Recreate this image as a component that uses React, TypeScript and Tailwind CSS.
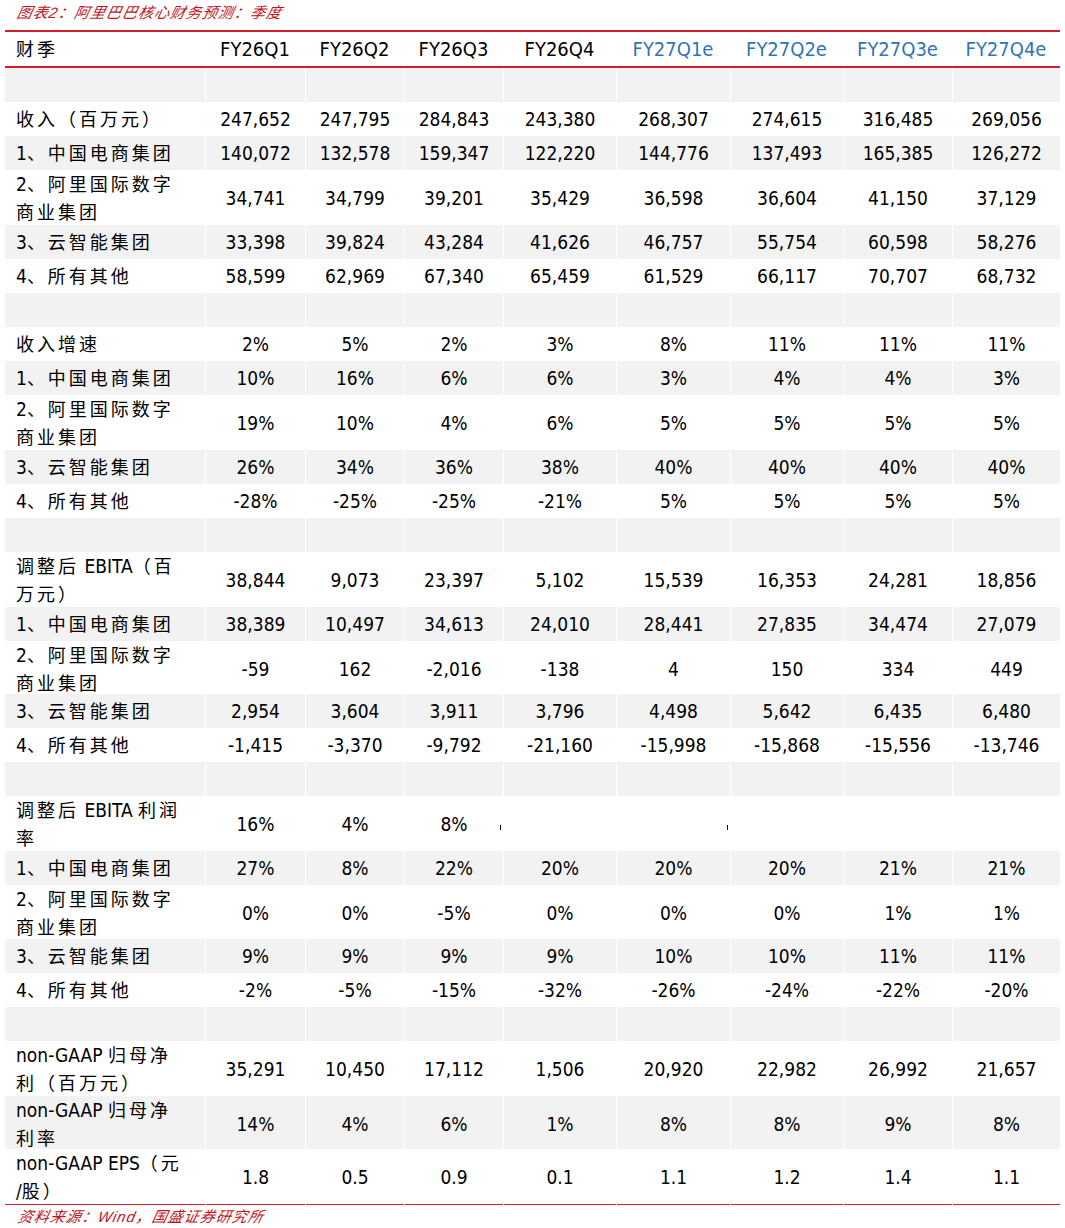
import React from "react";

const BLUE = "text-[#2e75b6]";

type Row = {
  label: string[];
  values: string[];
  gray: boolean;
  h: string;
  marks?: boolean;
};

const headers = ["FY26Q1", "FY26Q2", "FY26Q3", "FY26Q4", "FY27Q1e", "FY27Q2e", "FY27Q3e", "FY27Q4e"];

const SPACER: Row = { label: [], values: [], gray: true, h: "h-[34px]" };

const rows: Row[] = [
  SPACER,
  { label: ["收入（百万元）"], values: ["247,652", "247,795", "284,843", "243,380", "268,307", "274,615", "316,485", "269,056"], gray: false, h: "h-[34px]" },
  { label: ["1、中国电商集团"], values: ["140,072", "132,578", "159,347", "122,220", "144,776", "137,493", "165,385", "126,272"], gray: true, h: "h-[34px]" },
  { label: ["2、阿里国际数字", "商业集团"], values: ["34,741", "34,799", "39,201", "35,429", "36,598", "36,604", "41,150", "37,129"], gray: false, h: "h-[55px]" },
  { label: ["3、云智能集团"], values: ["33,398", "39,824", "43,284", "41,626", "46,757", "55,754", "60,598", "58,276"], gray: true, h: "h-[34px]" },
  { label: ["4、所有其他"], values: ["58,599", "62,969", "67,340", "65,459", "61,529", "66,117", "70,707", "68,732"], gray: false, h: "h-[34px]" },
  SPACER,
  { label: ["收入增速"], values: ["2%", "5%", "2%", "3%", "8%", "11%", "11%", "11%"], gray: false, h: "h-[34px]" },
  { label: ["1、中国电商集团"], values: ["10%", "16%", "6%", "6%", "3%", "4%", "4%", "3%"], gray: true, h: "h-[34px]" },
  { label: ["2、阿里国际数字", "商业集团"], values: ["19%", "10%", "4%", "6%", "5%", "5%", "5%", "5%"], gray: false, h: "h-[55px]" },
  { label: ["3、云智能集团"], values: ["26%", "34%", "36%", "38%", "40%", "40%", "40%", "40%"], gray: true, h: "h-[34px]" },
  { label: ["4、所有其他"], values: ["-28%", "-25%", "-25%", "-21%", "5%", "5%", "5%", "5%"], gray: false, h: "h-[34px]" },
  SPACER,
  { label: ["调整后 EBITA（百", "万元）"], values: ["38,844", "9,073", "23,397", "5,102", "15,539", "16,353", "24,281", "18,856"], gray: false, h: "h-[55px]" },
  { label: ["1、中国电商集团"], values: ["38,389", "10,497", "34,613", "24,010", "28,441", "27,835", "34,474", "27,079"], gray: true, h: "h-[34px]" },
  { label: ["2、阿里国际数字", "商业集团"], values: ["-59", "162", "-2,016", "-138", "4", "150", "334", "449"], gray: false, h: "h-[53px]" },
  { label: ["3、云智能集团"], values: ["2,954", "3,604", "3,911", "3,796", "4,498", "5,642", "6,435", "6,480"], gray: true, h: "h-[34px]" },
  { label: ["4、所有其他"], values: ["-1,415", "-3,370", "-9,792", "-21,160", "-15,998", "-15,868", "-15,556", "-13,746"], gray: false, h: "h-[34px]" },
  SPACER,
  { label: ["调整后 EBITA 利润", "率"], values: ["16%", "4%", "8%", "", "", "", "", ""], gray: false, h: "h-[55px]", marks: true },
  { label: ["1、中国电商集团"], values: ["27%", "8%", "22%", "20%", "20%", "20%", "21%", "21%"], gray: true, h: "h-[34px]" },
  { label: ["2、阿里国际数字", "商业集团"], values: ["0%", "0%", "-5%", "0%", "0%", "0%", "1%", "1%"], gray: false, h: "h-[54px]" },
  { label: ["3、云智能集团"], values: ["9%", "9%", "9%", "9%", "10%", "10%", "11%", "11%"], gray: true, h: "h-[34px]" },
  { label: ["4、所有其他"], values: ["-2%", "-5%", "-15%", "-32%", "-26%", "-24%", "-22%", "-20%"], gray: false, h: "h-[34px]" },
  SPACER,
  { label: ["non-GAAP 归母净", "利（百万元）"], values: ["35,291", "10,450", "17,112", "1,506", "20,920", "22,982", "26,992", "21,657"], gray: false, h: "h-[55px]" },
  { label: ["non-GAAP 归母净", "利率"], values: ["14%", "4%", "6%", "1%", "8%", "8%", "9%", "8%"], gray: true, h: "h-[53px]" },
  { label: ["non-GAAP EPS（元", "/股）"], values: ["1.8", "0.5", "0.9", "0.1", "1.1", "1.2", "1.4", "1.1"], gray: false, h: "h-[55px]" },
];

const GRID =
  "grid grid-cols-[200px_100px_99px_99px_113px_114px_113px_109px_108px]";

function Label({ text }: { text: string }) {
  const parts = text.split(/([\u3000-\u303f\u4e00-\u9fff\uff00-\uffef]+)/).filter((p) => p.length > 0);
  return (
    <span>
      {parts.map((p, i) =>
        /[\u3000-\u303f\u4e00-\u9fff\uff00-\uffef]/.test(p) ? (
          <span key={i} className="tracking-[3px] text-[18px] [font-family:'Noto_Sans_CJK_SC',sans-serif]">
            {p}
          </span>
        ) : (
          <span key={i}>{p}</span>
        )
      )}
    </span>
  );
}

export default function App() {
  return (
    <div className="w-[1065px] h-[1228px] bg-white text-black [font-family:'DejaVu_Sans_Condensed','DejaVu_Sans','Noto_Sans_CJK_SC',sans-serif] [font-stretch:semi-condensed]">
      <div className="h-[30px] pl-[17px] pt-[3px] text-[15px] leading-[20px] tracking-[1px] text-[#c0141e] [font-family:'Liberation_Sans','Noto_Sans_CJK_SC',sans-serif]">
        <span className="inline-block -skew-x-12 italic">图表2：阿里巴巴核心财务预测：季度</span>
      </div>
      <div className="mx-[5px]">
        <div className="h-[2px] bg-[#d41f2b]" />
        <div className={`${GRID} h-[34px] text-[20px] items-center`}>
          <div className="pl-[11px]">
            <Label text="财季" />
          </div>
          {headers.map((h, i) => (
            <div key={h} className={`text-center ${i >= 4 ? BLUE : ""}`}>
              {h}
            </div>
          ))}
        </div>
        <div className="h-[2px] bg-[#d41f2b]" />
        {rows.map((r, ri) => (
          <div key={ri} className={`${GRID} ${r.h} relative text-[19px] ${r.gray ? "bg-[#f2f2f2]" : "bg-white"}`}>
            <div className="pl-[11px] flex flex-col justify-center leading-[27px]">
              {r.label.map((l, li) => (
                <div key={li} className="whitespace-nowrap">
                  <Label text={l} />
                </div>
              ))}
            </div>
            {Array.from({ length: 8 }).map((_, ci) => (
              <div key={ci} className="border-l border-white flex items-center justify-center">
                {r.values[ci] ?? ""}
              </div>
            ))}
            {r.marks && (
              <>
                <div className="absolute left-[495px] top-[29px] w-px h-[5px] bg-black" />
                <div className="absolute left-[722px] top-[29px] w-px h-[5px] bg-black" />
              </>
            )}
          </div>
        ))}
        <div className="h-px bg-[#d41f2b]" />
      </div>
      <div className="pl-[18px] pt-[2px] text-[15px] leading-[20px] tracking-[1px] text-[#c0141e] [font-family:'Liberation_Sans','Noto_Sans_CJK_SC',sans-serif]">
        <span className="inline-block -skew-x-12 italic">资料来源：Wind，国盛证券研究所</span>
      </div>
    </div>
  );
}
